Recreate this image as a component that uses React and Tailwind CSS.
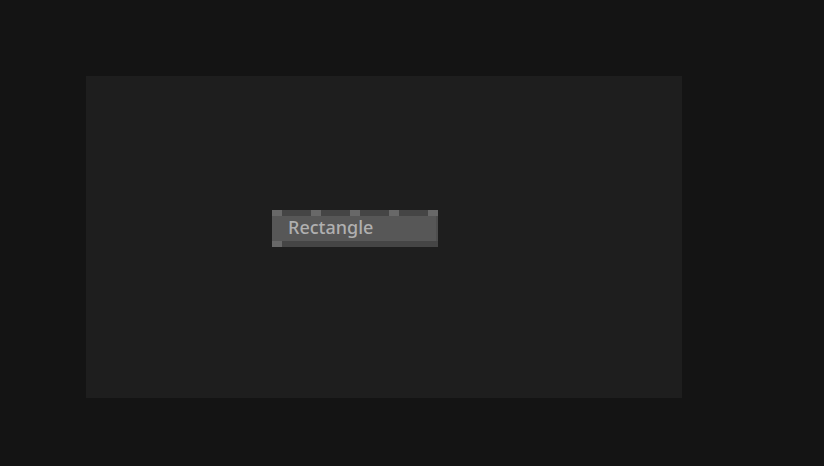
export default function App() {
  const ports = [0, 1, 2, 3, 4];
  return (
    <div className="w-[824px] h-[466px] bg-[#141414] pl-[86px] pt-[76px]">
      <div className="relative w-[596px] h-[322px] bg-[#1e1e1e]">
        <div className="absolute left-[186px] top-[134px] w-[166px] flex flex-col">
          <div className="h-[6px] bg-[#454545] flex justify-between">
            {ports.map((p) => (
              <div key={p} className="w-[10px] h-full bg-[#686868]" />
            ))}
          </div>
          <div className="h-[25px] bg-[#575757] border-r-2 border-[#4e4e4e] pl-4 pt-[2px] text-[18px] leading-[18px] font-medium text-[#b0b0b0] font-['Noto_Sans',sans-serif]">
            Rectangle
          </div>
          <div className="h-[6px] bg-[#454545] flex">
            <div className="w-[10px] h-full bg-[#686868]" />
          </div>
        </div>
      </div>
    </div>
  );
}
